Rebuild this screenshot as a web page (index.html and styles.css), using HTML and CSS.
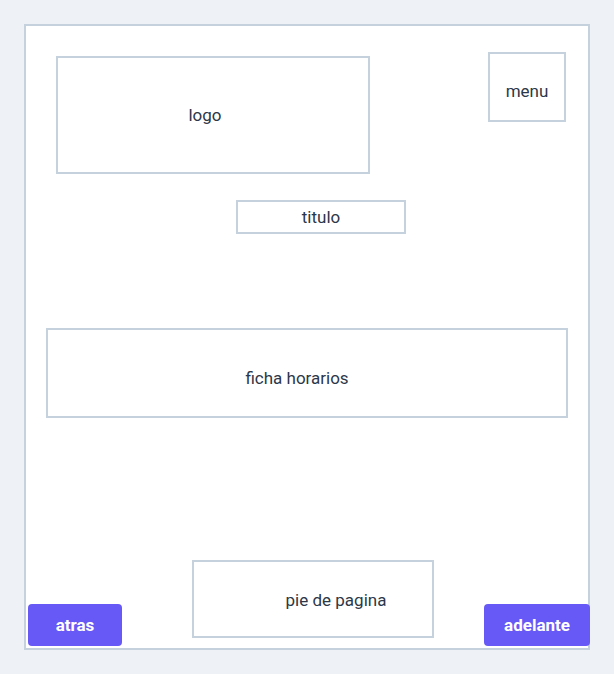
FILE: index.html
```html
<!DOCTYPE html>
<html lang="es">
<head>
<meta charset="utf-8">
<title>Wireframe</title>
<link rel="stylesheet" href="styles.css">
</head>
<body>
<div class="frame">
  <div class="header">
    <div class="box logo">logo</div>
    <div class="box menu">menu</div>
  </div>
  <div class="box titulo">titulo</div>
  <div class="box ficha">ficha horarios</div>
  <div class="box pie">pie de pagina</div>
  <button class="btn btn-back">atras</button>
  <button class="btn btn-next">adelante</button>
</div>
</body>
</html>
```
FILE: styles.css
```css
* { box-sizing: border-box; }
html, body { margin: 0; padding: 0; }
body {
  background: #eef2f6;
  padding: 24px;
  font-family: Roboto, "Noto Sans", sans-serif;
  font-size: 17px;
  color: #2d3748;
}
.frame {
  position: relative;
  width: 566px;
  height: 626px;
  border: 2px solid #c5d1dc;
  background: #ffffff;
}
.header {
  display: flex;
  justify-content: space-between;
  align-items: flex-start;
  padding: 26px 22px 0 30px;
}
.box {
  border: 2px solid #c5d1dc;
  display: flex;
  align-items: center;
  justify-content: center;
}
.logo {
  width: 314px;
  height: 118px;
  margin-top: 4px;
  padding-right: 16px;
}
.menu {
  width: 78px;
  height: 70px;
  padding-top: 8px;
}
.titulo {
  width: 170px;
  height: 34px;
  margin: 26px 0 0 210px;
}
.ficha {
  width: 522px;
  height: 90px;
  margin: 94px 0 0 20px;
  padding-top: 10px;
  padding-right: 20px;
}
.pie {
  width: 242px;
  height: 78px;
  margin: 142px 0 0 166px;
  padding-left: 46px;
  padding-top: 2px;
}
.btn {
  position: absolute;
  bottom: 2px;
  height: 42px;
  border: none;
  border-radius: 4px;
  background: #6659f5;
  color: #ffffff;
  font-family: Roboto, "Noto Sans", sans-serif;
  font-weight: 700;
  font-size: 17px;
  padding: 0;
}
.btn-back {
  left: 2px;
  width: 94px;
}
.btn-next {
  right: -2px;
  width: 106px;
}
```
